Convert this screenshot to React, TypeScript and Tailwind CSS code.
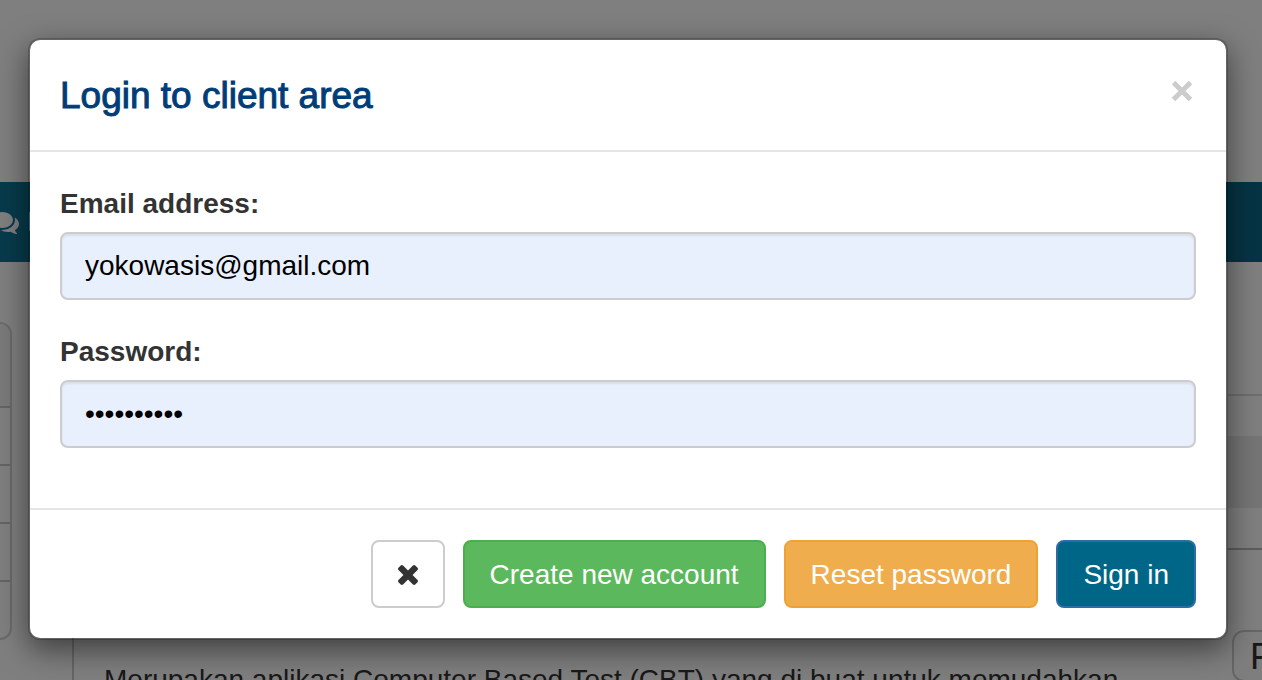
const buttonBase =
  "h-[68px] rounded-lg border-2 px-[25px] pt-0.5 text-[28px] leading-10 whitespace-nowrap";
const inputBase =
  "block h-[68px] w-full rounded-lg border-2 border-[#ccc] bg-[#e8f0fe] px-[23px] text-[28px] text-black shadow-[inset_0_2px_2px_rgba(0,0,0,0.075)] outline-none";
const labelBase = "mb-2 block pt-0.5 text-[28px] leading-10 font-bold";

function CommentsIcon() {
  return (
    <svg viewBox="0 0 1792 1792" className="-ml-[9px] size-7 shrink-0" fill="currentColor">
      <path d="M1408 768q0 139-94 257t-256.5 186.5-353.5 68.5q-86 0-176-16-124 88-278 128-36 9-86 16h-3q-11 0-20.5-8t-11.5-21q-1-3-1-6.5t.5-6.5 2-6l2.5-5 3.5-5.5 4-5 4.5-5 4-4.5q5-6 23-25t26-29.5 22.5-29 25-38.5 20.5-44q-124-72-195-177t-71-224q0-139 94-257t256.5-186.5 353.5-68.5 353.5 68.5 256.5 186.5 94 257zm384 256q0 120-71 224.5t-195 176.5q10 24 20.5 44t25 38.5 22.5 29 26 29.5 23 25q1 1 4 4.5t4.5 5 4 5 3.5 5.5l2.5 5 2 6 .5 6.5-1 6.5q-3 14-13 22t-22 7q-50-7-86-16-154-40-278-128-90 16-176 16-271 0-472-132 58 4 88 4 161 0 309-45t264-129q125-92 192-212t67-257q0-77-23-152 129 71 204 178t75 230z" />
    </svg>
  );
}

function TimesIcon() {
  return (
    <svg viewBox="110 366 1188 1188" className="size-5" fill="currentColor">
      <path d="M1298 1322q0 40-28 68l-136 136q-28 28-68 28t-68-28l-294-294-294 294q-28 28-68 28t-68-28l-136-136q-28-28-28-68t28-68l294-294-294-294q-28-28-28-68t28-68l136-136q28-28 68-28t68 28l294 294 294-294q28-28 68-28t68 28l136 136q28 28 28 68t-28 68l-294 294 294 294q28 28 28 68z" />
    </svg>
  );
}

function SidebarList() {
  return (
    <ul className="mt-[60px] h-[318px] w-3 shrink-0 overflow-hidden rounded-r-xl border-2 border-l-0 border-[#d5d5d5]">
      <li className="h-[84px] border-b-2 border-[#c8c8c8] bg-[#f5f5f5]" />
      <li className="h-[58px] border-b-2 border-[#c8c8c8]" />
      <li className="h-[58px] border-b-2 border-[#c8c8c8]" />
      <li className="h-[58px] border-b-2 border-[#c8c8c8]" />
      <li />
    </ul>
  );
}

function BackgroundPage() {
  return (
    <div className="flex h-screen flex-col overflow-hidden bg-white" aria-hidden="true">
      <header className="h-[182px] shrink-0" />
      <nav className="flex h-20 shrink-0 items-center gap-2 overflow-hidden bg-linear-to-r from-[#0e7698] to-[#0c6888] text-[28px] text-white">
        <CommentsIcon />
        <span>Live Chat</span>
      </nav>
      <div className="flex min-h-0 flex-1">
        <SidebarList />
        <main className="ml-[60px] h-[600px] min-w-0 flex-1 overflow-hidden border-l-2 border-[#ccc] pl-[30px]">
          <p className="mt-[398px] text-[28px] leading-10 whitespace-nowrap text-[#333]">
            Merupakan aplikasi Computer Based Test (CBT) yang di buat untuk memudahkan
          </p>
        </main>
        <aside className="w-[34px] shrink-0 overflow-hidden">
          <div className="h-[134px] border-b-2 border-[#ddd]" />
          <div className="h-10" />
          <div className="h-[72px] bg-[#ebebeb]" />
          <div className="h-[42px] border-b-2 border-[#bbb]" />
          <div className="mt-20 ml-1 h-[52px] w-[120px] rounded-xl border-2 border-[#ccc] bg-[#fcfcfc] pl-4 text-[36px] leading-[50px] text-[#333]">
            F
          </div>
        </aside>
      </div>
    </div>
  );
}

export default function App() {
  return (
    <div className="relative h-screen overflow-hidden font-['Liberation_Sans',Arial,sans-serif] text-[#333]">
      <BackgroundPage />
      <div className="absolute inset-0 bg-black/50 pt-[38px] pr-[34px] pl-7">
        <form
          role="dialog"
          aria-labelledby="login-title"
          onSubmit={(e) => e.preventDefault()}
          className="rounded-xl border-2 border-black/20 bg-white bg-clip-padding shadow-[0_10px_30px_rgba(0,0,0,0.5)]"
        >
          <header className="flex h-28 items-center justify-between border-b-2 border-[#e5e5e5] px-[30px]">
            <h4
              id="login-title"
              className="pt-0.5 text-[37px] leading-[52px] text-[#003d78] [-webkit-text-stroke:1px_#003d78]"
            >
              Login to client area
            </h4>
            <button type="button" aria-label="Close" className="mb-2 p-1 text-[#ccc]">
              <svg viewBox="0 0 20 20" className="size-5" fill="none" stroke="currentColor" strokeWidth="5">
                <path d="M1.5 1.5 18.5 18.5M18.5 1.5 1.5 18.5" />
              </svg>
            </button>
          </header>
          <div className="flex h-[358px] flex-col gap-[30px] border-b-2 border-[#e5e5e5] px-[30px] pt-[30px]">
            <div>
              <label htmlFor="email" className={labelBase}>
                Email address:
              </label>
              <input id="email" type="email" defaultValue="yokowasis@gmail.com" className={inputBase} />
            </div>
            <div>
              <label htmlFor="password" className={labelBase}>
                Password:
              </label>
              <input id="password" type="password" defaultValue="abcdefghij" className={inputBase} />
            </div>
          </div>
          <footer className="flex justify-end gap-[18px] p-[30px]">
            <button
              type="button"
              aria-label="Cancel"
              className={`${buttonBase} border-[#ccc] bg-white text-[#333]`}
            >
              <TimesIcon />
            </button>
            <button type="button" className={`${buttonBase} border-[#4cae4c] bg-[#5cb85c] text-white`}>
              Create new account
            </button>
            <button type="button" className={`${buttonBase} border-[#eea236] bg-[#f0ad4e] text-white`}>
              Reset password
            </button>
            <button type="submit" className={`${buttonBase} border-[#2e6da4] bg-[#006687] text-white`}>
              Sign in
            </button>
          </footer>
        </form>
      </div>
    </div>
  );
}
